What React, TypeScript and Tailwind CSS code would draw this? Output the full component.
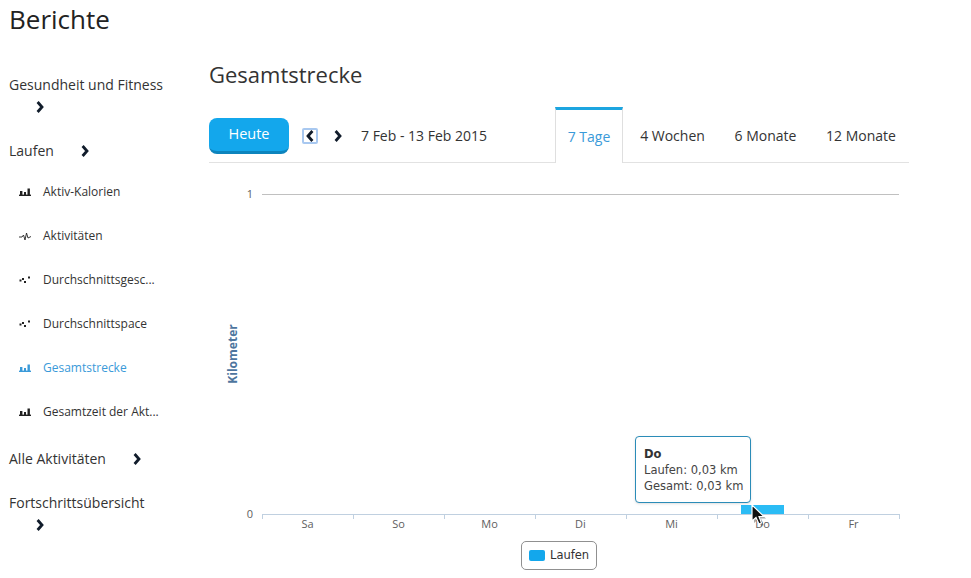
import type { ReactNode } from "react";

const days = ["Sa", "So", "Mo", "Di", "Mi", "Do", "Fr"];
const ticks = [262, 353, 444, 535, 626, 717, 808, 899];

function Chevron({ dir = "right", className }: { dir?: "left" | "right"; className?: string }) {
  return (
    <svg viewBox="0 0 8 12" className={`w-2 h-3 ${className ?? ""}`}>
      <path
        d={dir === "right" ? "M1.6 1 L6 6 L1.6 11" : "M6.4 1 L2 6 L6.4 11"}
        fill="none"
        stroke="#111c2b"
        strokeWidth="2.8"
      />
    </svg>
  );
}

function BarIcon() {
  return (
    <svg viewBox="0 0 12 9" className="w-3 h-[9px]" fill="currentColor">
      <rect x="0" y="6.6" width="12" height="1.4" />
      <rect x="1" y="3" width="2.4" height="4" />
      <rect x="5" y="4" width="2" height="3" />
      <rect x="8.5" y="0.5" width="2.4" height="6.5" />
    </svg>
  );
}

function LineIcon() {
  return (
    <svg viewBox="0 0 12 9" className="w-3 h-[9px]">
      <path d="M0 5 L3 5 L4.5 3 L6 8 L7.5 1 L9 6 L12 4.5" fill="none" stroke="currentColor" strokeWidth="0.9" />
    </svg>
  );
}

function ScatterIcon() {
  return (
    <svg viewBox="0 0 12 9" className="w-3 h-[9px]" fill="currentColor">
      <rect x="0.5" y="3.5" width="2" height="2" />
      <rect x="3" y="2" width="2" height="2" />
      <rect x="5" y="5" width="2" height="2" />
      <rect x="9" y="0.5" width="2" height="2" />
    </svg>
  );
}

function NavHeading({ children }: { children: ReactNode }) {
  return (
    <div className="w-[160px] text-[14px] leading-[22px] text-[#333]">
      {children}
      <Chevron className="inline-block ml-[27px] align-[-1px]" />
    </div>
  );
}

function SubItem({ icon, label, active }: { icon: ReactNode; label: string; active?: boolean }) {
  return (
    <div className={`h-11 flex items-center pl-[10px] text-[12px] ${active ? "text-[#3a9ad9]" : "text-[#333]"}`}>
      <span className={`w-6 flex ${active ? "text-[#3a9ad9]" : "text-[#222]"}`}>{icon}</span>
      {label}
    </div>
  );
}

function Tab({ label, active, className }: { label: string; active?: boolean; className: string }) {
  return (
    <div
      className={`h-[56px] -mb-px flex items-center justify-center text-[14px] ${className} ${
        active
          ? "border-x border-[#dfdfdf] border-t-[3px] border-t-[#1ca5e0] bg-white text-[#3a9ad9]"
          : "text-[#333]"
      }`}
    >
      {label}
    </div>
  );
}

function Plot() {
  return (
    <svg viewBox="209 170 700 365" className="w-[700px] h-[365px] block">
      <line x1="262" y1="194.5" x2="899" y2="194.5" stroke="#c0c0c0" />
      <text x="250" y="198" textAnchor="middle" fontSize="11" fill="#606060">1</text>
      <text x="250" y="518" textAnchor="middle" fontSize="11" fill="#606060">0</text>
      <text
        x="237"
        y="354"
        textAnchor="middle"
        fontSize="12"
        fontWeight="700"
        fill="#4d759e"
        transform="rotate(-90 237 354)"
      >
        Kilometer
      </text>
      <rect x="741" y="505" width="43" height="9" fill="#2bbcf5" />
      <line x1="262" y1="514.5" x2="899" y2="514.5" stroke="#c0d0e0" />
      {ticks.map((x) => (
        <line key={x} x1={x + 0.5} y1="514" x2={x + 0.5} y2="519" stroke="#c0d0e0" />
      ))}
      {days.map((d, i) => (
        <text key={d} x={ticks[i] + 45.5} y="528" textAnchor="middle" fontSize="11" fill="#606060">
          {d}
        </text>
      ))}
    </svg>
  );
}

export default function App() {
  return (
    <div className="w-[971px] h-[578px] overflow-hidden bg-white font-['Open_Sans',sans-serif] text-[#333]">
      <h1 className="pl-[9px] pt-[2px] h-[74px] text-[26px] leading-[34px] text-[#222]">Berichte</h1>

      <div className="flex">
        <aside className="w-[209px] pl-[9px] shrink-0">
          <NavHeading>Gesundheit und Fitness</NavHeading>
          <div className="mt-[22px]">
            <NavHeading>Laufen</NavHeading>
          </div>
          <div className="mt-[8px]">
            <SubItem icon={<BarIcon />} label="Aktiv-Kalorien" />
            <SubItem icon={<LineIcon />} label="Aktivitäten" />
            <SubItem icon={<ScatterIcon />} label="Durchschnittsgesc..." />
            <SubItem icon={<ScatterIcon />} label="Durchschnittspace" />
            <SubItem icon={<BarIcon />} label="Gesamtstrecke" active />
            <SubItem icon={<BarIcon />} label="Gesamtzeit der Akt..." />
          </div>
          <div className="mt-[14px] flex flex-col gap-[22px]">
            <NavHeading>Alle Aktivitäten</NavHeading>
            <NavHeading>Fortschrittsübersicht</NavHeading>
          </div>
        </aside>

        <main className="w-[700px] shrink-0 -mt-[14px]">
          <h2 className="text-[22px] leading-[28px] text-[#333]">Gesamtstrecke</h2>

          <div className="mt-[21px] h-[54px] flex items-center border-b border-[#e2e2e2]">
            <button className="w-20 h-9 rounded-lg bg-[#13a7ec] border-b-[3px] border-[#0d84bd] text-white text-[14.5px] font-medium">
              Heute
            </button>
            <span className="ml-[13px] w-4 h-4 flex items-center justify-center border-2 border-[#a8c8f0] rounded-[2px]">
              <Chevron dir="left" />
            </span>
            <Chevron className="ml-4" />
            <span className="ml-[19px] text-[14px] text-[#333]">7 Feb - 13 Feb 2015</span>
            <div className="ml-auto flex items-end self-end">
              <Tab label="7 Tage" active className="w-[68px] mr-[9px]" />
              <Tab label="4 Wochen" className="w-[81px] mr-[15px]" />
              <Tab label="6 Monate" className="w-[75px] mr-[23px]" />
              <Tab label="12 Monate" className="w-[70px] mr-[13px]" />
            </div>
          </div>

          <div className="relative mt-[7px]">
            <Plot />
            <div className="absolute left-[426px] top-[266px] w-[116px] h-[67px] bg-white border border-[#2b8cb8] rounded-[4px] shadow-sm px-2 pt-[9px] text-[11.5px] leading-[16px] text-[#444] font-['DejaVu_Sans',sans-serif] whitespace-nowrap">
              <div className="font-bold text-[#333]">Do</div>
              <div>Laufen: 0,03 km</div>
              <div>Gesamt: 0,03 km</div>
            </div>
            <svg viewBox="0 0 15 23" className="absolute left-[542px] top-[334px] w-[15px] h-[23px]">
              <path d="M3 3 L3 19 L7 15.5 L10 22 L12.5 21 L10 14.5 L15 14.5 Z" fill="#00000055" />
              <path d="M1 1 L1 17 L5 13.5 L8 20 L10.5 19 L8 12.5 L13 12.5 Z" fill="#111" stroke="#fff" strokeWidth="1.2" />
            </svg>
          </div>

          <div className="flex justify-center mt-[6px]">
            <div className="w-[76px] h-[29px] flex items-center gap-[5px] pl-[7px] border border-[#909090] rounded-[5px] text-[11.5px] text-[#333] font-['DejaVu_Sans',sans-serif]">
              <span className="w-4 h-[11px] rounded-[2px] bg-[#13a7ec]" />
              Laufen
            </div>
          </div>
        </main>
      </div>
    </div>
  );
}
